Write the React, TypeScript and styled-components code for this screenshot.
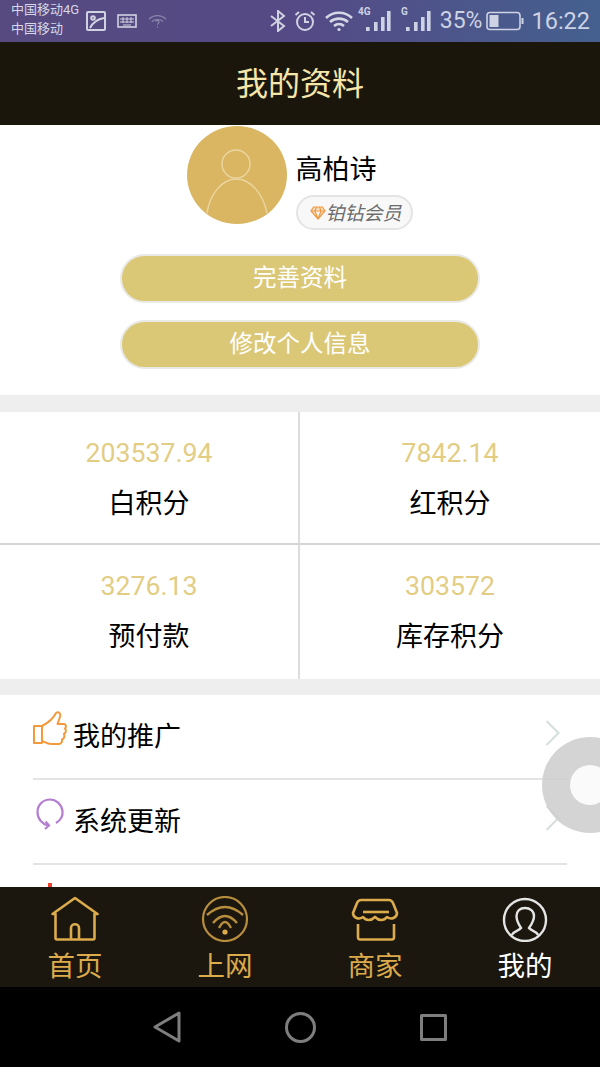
import React from 'react';
import styled, { createGlobalStyle } from 'styled-components';

const CJK = `Roboto, "Noto Sans CJK SC", sans-serif`;

const GlobalStyle = createGlobalStyle`
  html, body {
    margin: 0;
    padding: 0;
    background: #fff;
  }
  * {
    box-sizing: border-box;
  }
`;

const Screen = styled.div`
  position: relative;
  display: flex;
  flex-direction: column;
  width: 600px;
  height: 1067px;
  overflow: hidden;
  font-family: ${CJK};
`;

const StatusBar = styled.div`
  display: flex;
  align-items: center;
  height: 42px;
  padding: 0 10px 0 11px;
  background: linear-gradient(90deg, #564a80 0%, #554a85 50%, #44608f 100%);
  color: #d5d7e6;
  flex-shrink: 0;
`;

const Carrier = styled.div`
  width: 72px;
  margin-top: -5px;
  font-size: 13px;
  line-height: 19px;
  white-space: nowrap;
`;

const StatusLeft = styled.div`
  display: flex;
  align-items: center;
  gap: 11px;
  margin-left: 3px;
`;

const StatusRight = styled.div`
  display: flex;
  align-items: center;
  margin-left: auto;
`;

const StatusIcon = styled.span<{ $gap?: number }>`
  display: flex;
  margin-left: ${(p) => p.$gap ?? 0}px;
`;

const StatusText = styled.span<{ $gap?: number; $size: number }>`
  font-size: ${(p) => p.$size}px;
  line-height: 42px;
  margin-left: ${(p) => p.$gap ?? 0}px;
  color: #cdd2e4;
`;

const Header = styled.header`
  display: flex;
  align-items: center;
  justify-content: center;
  height: 83px;
  padding-bottom: 5px;
  background: #1a160c;
  color: #f5e6ab;
  font-size: 32px;
  flex-shrink: 0;
`;

const Content = styled.main`
  flex: 1;
  overflow: hidden;
  background: #fff;
`;

const Profile = styled.section`
  display: flex;
  flex-direction: column;
  align-items: center;
  height: 270px;
  padding-top: 1px;
`;

const UserRow = styled.div`
  display: flex;
  align-items: flex-start;
  width: 228px;
  margin-left: 1px;
  gap: 9px;
`;

const Avatar = styled.div`
  width: 100px;
  height: 98px;
  border-radius: 50%;
  background: #dab663;
  flex-shrink: 0;
  svg {
    display: block;
  }
`;

const UserInfo = styled.div`
  display: flex;
  flex-direction: column;
  align-items: flex-start;
  padding-top: 25px;
`;

const UserName = styled.div`
  font-size: 27px;
  line-height: 38px;
  color: #000;
  white-space: nowrap;
`;

const Badge = styled.div`
  display: flex;
  align-items: center;
  height: 35px;
  margin-top: 6px;
  padding-left: 12px;
  width: 117px;
  border: 2px solid #e4e4e4;
  border-radius: 18px;
  background: #f8f8f8;
  color: #6c6c6c;
  font-size: 19px;
  font-style: italic;
  white-space: nowrap;
`;

const BadgeText = styled.span`
  margin: -3px 0 0 0;
`;

const PillButton = styled.button<{ $top: number }>`
  display: block;
  width: 360px;
  height: 49px;
  margin-top: ${(p) => p.$top}px;
  padding: 0;
  border: 2px solid #e9e9e6;
  border-radius: 25px;
  background: #dbc877;
  color: #fff;
  font-family: ${CJK};
  font-size: 23.5px;
  line-height: 45px;
`;

const Divider = styled.div<{ $height: number }>`
  height: ${(p) => p.$height}px;
  background: #eeeeee;
`;

const StatsGrid = styled.section`
  display: grid;
  grid-template-columns: 300px 300px;
  grid-template-rows: 133px 134px;
`;

const StatCell = styled.div<{ $left?: boolean; $top?: boolean }>`
  display: flex;
  flex-direction: column;
  align-items: center;
  padding-top: 22px;
  border-right: ${(p) => (p.$left ? '2px solid #dcdcdc' : 'none')};
  border-bottom: ${(p) => (p.$top ? '2px solid #d4d4d4' : 'none')};
`;

const StatValue = styled.div`
  font-size: 26.7px;
  line-height: 38px;
  color: #e2cd83;
`;

const StatLabel = styled.div`
  margin-top: 13px;
  font-size: 27px;
  line-height: 38px;
  color: #000;
`;

const MenuList = styled.section`
  padding: 0 33px;
`;

const MenuRow = styled.div`
  display: flex;
  align-items: center;
  height: 85px;
  border-bottom: 2px solid #e4e4e4;
`;

const MenuIcon = styled.div`
  width: 40px;
  height: 40px;
  margin-top: -12px;
  flex-shrink: 0;
  svg {
    display: block;
  }
`;

const MenuLabel = styled.div`
  font-size: 27px;
  line-height: 38px;
  color: #000;
`;

const Chevron = styled.div`
  margin: -8px 6px 0 auto;
  svg {
    display: block;
  }
`;

const RedMark = styled.div`
  width: 4px;
  height: 4px;
  margin: 18px 0 0 15px;
  background: #f0432e;
`;

const FloatBall = styled.div`
  position: absolute;
  left: 542px;
  top: 737px;
  width: 96px;
  height: 96px;
  border-radius: 50%;
  background: rgba(205, 205, 205, 0.85);
  display: flex;
  align-items: center;
  justify-content: center;
  &::after {
    content: '';
    width: 40px;
    height: 40px;
    border-radius: 50%;
    background: #fafafa;
  }
`;

const TabBar = styled.nav`
  display: grid;
  grid-template-columns: repeat(4, 150px);
  height: 100px;
  background: #1b170e;
  flex-shrink: 0;
`;

const Tab = styled.div<{ $active?: boolean }>`
  display: flex;
  flex-direction: column;
  align-items: center;
  padding-top: 9px;
  color: ${(p) => (p.$active ? '#ffffff' : '#dcab4b')};
  font-size: 27.5px;
  line-height: 36px;
  svg {
    display: block;
    margin-bottom: 7px;
  }
`;

const NavBar = styled.div`
  display: flex;
  align-items: center;
  gap: 104px;
  height: 80px;
  padding-left: 153px;
  background: #000;
  flex-shrink: 0;
  svg {
    display: block;
  }
`;

const stats = [
  { value: '203537.94', label: '白积分', left: true, top: true },
  { value: '7842.14', label: '红积分', top: true },
  { value: '3276.13', label: '预付款', left: true },
  { value: '303572', label: '库存积分' },
];

function ChevronIcon() {
  return (
    <svg width="16" height="26" viewBox="0 0 16 26" fill="none" stroke="#d4dedb" strokeWidth="2">
      <path d="M1.5 1 L13.5 13 L1.5 25" />
    </svg>
  );
}

function SignalIcon({ label, textX }: { label: string; textX: number }) {
  return (
    <svg width="33" height="30" viewBox="0 0 33 30" fill="#cdd2e4">
      <rect x="8" y="21" width="3.6" height="4" />
      <rect x="16" y="16" width="3.6" height="9" />
      <rect x="23" y="11" width="3.6" height="14" />
      <rect x="29" y="5" width="3.6" height="20" />
      <text x={textX} y="9" fontSize="10" fontWeight="700" fontFamily="Roboto, sans-serif">{label}</text>
    </svg>
  );
}

export default function App() {
  return (
    <Screen>
      <GlobalStyle />
      <StatusBar>
        <Carrier>
          中国移动4G
          <br />
          中国移动
        </Carrier>
        <StatusLeft>
          <svg width="20" height="20" viewBox="0 0 20 20" fill="none" stroke="#d0d2e2" strokeWidth="2">
            <rect x="1" y="1" width="18" height="18" rx="1" />
            <circle cx="7" cy="7" r="1.8" />
            <path d="M4 17 C7 11 12 8 18 7" />
          </svg>
          <svg width="20" height="14" viewBox="0 0 20 14" fill="none" stroke="#d0d2e2" strokeWidth="1.6">
            <rect x="1" y="1" width="18" height="12" />
            <path d="M3 5 H17 M3 8 H17 M6 11 H14 M6 3 V9 M10 3 V9 M14 3 V9" strokeWidth="1" />
          </svg>
          <svg width="19" height="15" viewBox="0 0 20 15" fill="none" stroke="#8a85ad" strokeWidth="1.3">
            <path d="M1 5 C6 0 14 0 19 5 M4 7.5 C7.5 5 12.5 5 16 7.5" />
            <path d="M8 7.5 C8.5 6 11.5 6 11.5 8 C11.5 9.5 10 9.5 10 11 M10 12.5 V14" />
          </svg>
        </StatusLeft>
        <StatusRight>
          <StatusIcon>
            <svg width="16" height="22" viewBox="0 0 16 22" fill="none" stroke="#d0d2e2" strokeWidth="2">
              <path d="M1 6 L14 16 L8 21 V1 L14 6 L1 16" />
            </svg>
          </StatusIcon>
          <StatusIcon $gap={8}>
            <svg width="22" height="22" viewBox="0 0 22 22" fill="none" stroke="#d0d2e2" strokeWidth="2">
              <circle cx="11" cy="12" r="8" />
              <path d="M11 7 V12 H15 M1.5 5 L5 2 M20.5 5 L17 2" />
            </svg>
          </StatusIcon>
          <StatusIcon $gap={9}>
            <svg width="28" height="21" viewBox="0 0 28 21" fill="none" stroke="#d5d7e6" strokeWidth="2.6">
              <path d="M1 7 C8 0 20 0 27 7 M5 11 C10 6.5 18 6.5 23 11 M9 15 C12 12.5 16 12.5 19 15" />
              <circle cx="14" cy="18.5" r="1.6" fill="#d5d7e6" stroke="none" />
            </svg>
          </StatusIcon>
          <StatusIcon $gap={5}>
            <SignalIcon label="4G" textX={0} />
          </StatusIcon>
          <StatusIcon $gap={7}>
            <SignalIcon label="G" textX={3} />
          </StatusIcon>
          <StatusText $gap={9} $size={23}>35%</StatusText>
          <StatusIcon $gap={4}>
            <svg width="38" height="20" viewBox="0 0 38 20" fill="none" stroke="#cdd2e4" strokeWidth="1.6">
              <rect x="1" y="1.5" width="33" height="17" rx="3" />
              <rect x="3.5" y="4" width="9" height="12" fill="#cdd2e4" stroke="none" />
              <rect x="35.5" y="7" width="2" height="6" fill="#cdd2e4" stroke="none" />
            </svg>
          </StatusIcon>
          <StatusText $gap={7} $size={23.5}>16:22</StatusText>
        </StatusRight>
      </StatusBar>

      <Header>我的资料</Header>

      <Content>
        <Profile>
          <UserRow>
            <Avatar>
              <svg width="100" height="98" viewBox="0 0 100 98" fill="none" stroke="#ebd6a0" strokeWidth="1.4">
                <circle cx="49" cy="38" r="14" />
                <path d="M20 87 C23 68 35 53 49 53 C64 53 76 68 80 87" />
              </svg>
            </Avatar>
            <UserInfo>
              <UserName>高柏诗</UserName>
              <Badge>
                <svg width="16" height="14" viewBox="0 0 16 14" fill="#fbe1c3" stroke="#f09a45" strokeWidth="1.2">
                  <path d="M3.5 1 H12.5 L15 5 L8 13 L1 5 Z M1 5 H15 M5 5 L8 13 L11 5 M5 5 L6.5 1 M11 5 L9.5 1" />
                </svg>
                <BadgeText>铂钻会员</BadgeText>
              </Badge>
            </UserInfo>
          </UserRow>
          <PillButton $top={24}>完善资料</PillButton>
          <PillButton $top={17}>修改个人信息</PillButton>
        </Profile>

        <Divider $height={17} />

        <StatsGrid>
          {stats.map((s) => (
            <StatCell key={s.label} $left={s.left} $top={s.top}>
              <StatValue>{s.value}</StatValue>
              <StatLabel>{s.label}</StatLabel>
            </StatCell>
          ))}
        </StatsGrid>

        <Divider $height={16} />

        <MenuList>
          <MenuRow>
            <MenuIcon>
              <svg width="34" height="36" viewBox="0 0 34 36" fill="none" stroke="#f29a3c" strokeWidth="2" strokeLinejoin="round">
                <path d="M1 15 H9 V32 H1 Z" />
                <path d="M9 15 C15 12 20 8 23 2 C26 0 28 3 27 6 L24.5 13 H31 C33 13 33.5 16 32 17.5 C33.5 19 33 22 31 23 C32 25 31 28 29 28.5 C29.5 31 28 33 26 33 H18 C14 33 12 31 9 30" />
              </svg>
            </MenuIcon>
            <MenuLabel>我的推广</MenuLabel>
            <Chevron>
              <ChevronIcon />
            </Chevron>
          </MenuRow>
          <MenuRow>
            <MenuIcon>
              <svg width="34" height="36" viewBox="0 0 34 36" fill="none" stroke="#b57ed2" strokeWidth="2.2">
                <path d="M23 27 C28 24 30 19 29.5 15 C28.5 8 23 3.5 17 3.5 C10 3.5 4.5 9 4.5 16 C4.5 23 9 28 15 29.5" />
                <path d="M12 33 L16 29.5 L12.5 25.5" />
              </svg>
            </MenuIcon>
            <MenuLabel>系统更新</MenuLabel>
            <Chevron>
              <ChevronIcon />
            </Chevron>
          </MenuRow>
          <RedMark />
        </MenuList>
      </Content>

      <FloatBall />

      <TabBar>
        <Tab>
          <svg width="48" height="46" viewBox="0 0 48 46" fill="none" stroke="#dcab4b" strokeWidth="2.6" strokeLinejoin="round">
            <path d="M1.5 18 L24 2 L46.5 18 L43.5 18 V42 C43.5 43 43 43.5 42 43.5 H6 C5 43.5 4.5 43 4.5 42 V18 Z" />
            <path d="M20 43 V32 C20 27 28 27 28 32 V43" />
          </svg>
          首页
        </Tab>
        <Tab>
          <svg width="48" height="46" viewBox="0 0 48 46" fill="none" stroke="#b78d3e" strokeWidth="2.2">
            <circle cx="24" cy="23" r="22" />
            <path d="M6 19 Q24 3 42 19" strokeWidth="2.4" />
            <path d="M12 27 Q24 13 36 27" strokeWidth="2.4" />
            <path d="M18 32 Q24 20 30 32" strokeWidth="2.4" />
            <circle cx="24" cy="36" r="2.6" fill="#dcab4b" stroke="none" />
          </svg>
          上网
        </Tab>
        <Tab>
          <svg width="48" height="46" viewBox="0 0 48 46" fill="none" stroke="#dcab4b" strokeWidth="2.6" strokeLinejoin="round">
            <path d="M10 4 H38 C40 4 41 5 42 7 L46 17 C46 22 40 24 36 21 C33 25 28 25 24 21 C20 25 15 25 12 21 C8 24 2 22 2 17 L6 7 C7 5 8 4 10 4 Z" />
            <path d="M12 16 H38" />
            <path d="M7 28 V41 C7 42.5 8 43.5 9 43.5 H41 C42 43.5 43 42.5 43 41 V28" />
          </svg>
          商家
        </Tab>
        <Tab $active>
          <svg width="48" height="46" viewBox="0 0 48 46" fill="none" stroke="#e4e4e4" strokeWidth="2.4">
            <circle cx="24" cy="24" r="21" />
            <path d="M11 39 C12 35 18 35 20 32 C18 29 15.5 25 15.5 20 C15.5 15 19 12 24 12 C29 12 33 15 33 20 C33 25 30 29 28 32 C30 35 36 35 37 39" />
          </svg>
          我的
        </Tab>
      </TabBar>

      <NavBar>
        <svg width="28" height="32" viewBox="0 0 28 32" fill="none" stroke="#7e7e7e" strokeWidth="3" strokeLinejoin="round">
          <path d="M26 2 V30 L2 16 Z" />
        </svg>
        <svg width="31" height="31" viewBox="0 0 31 31" fill="none" stroke="#7e7e7e" strokeWidth="3">
          <circle cx="15.5" cy="15.5" r="14" />
        </svg>
        <svg width="27" height="27" viewBox="0 0 27 27" fill="none" stroke="#7e7e7e" strokeWidth="3" strokeLinejoin="round">
          <rect x="1.5" y="1.5" width="24" height="24" />
        </svg>
      </NavBar>
    </Screen>
  );
}
